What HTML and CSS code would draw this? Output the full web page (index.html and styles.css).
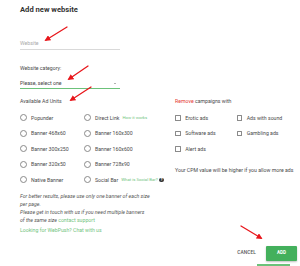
FILE: index.html
```html
<!DOCTYPE html>
<html lang="en">
<head>
<meta charset="utf-8">
<title>Add new website</title>
<link rel="stylesheet" href="styles.css">
</head>
<body>
<div class="dialog">
  <h1 class="title">Add new website</h1>
  <div class="field">Website</div>
  <div class="label cat-label">Website category:</div>
  <div class="select"><span>Please, select one</span><span class="caret"></span></div>

  <div class="units">
    <div class="col-left">
      <div class="label">Available Ad Units</div>
      <div class="radios">
        <div class="opt"><span class="radio"></span>Popunder</div>
        <div class="opt"><span class="radio"></span>Direct Link<span class="hint">How it works</span></div>
        <div class="opt"><span class="radio"></span>Banner 468x60</div>
        <div class="opt"><span class="radio"></span>Banner 160x300</div>
        <div class="opt"><span class="radio"></span>Banner 300x250</div>
        <div class="opt"><span class="radio"></span>Banner 160x600</div>
        <div class="opt"><span class="radio"></span>Banner 320x50</div>
        <div class="opt"><span class="radio"></span>Banner 728x90</div>
        <div class="opt"><span class="radio"></span>Native Banner</div>
        <div class="opt"><span class="radio"></span>Social Bar<span class="hint">What is Social Bar?</span><span class="info">?</span></div>
      </div>
    </div>
    <div class="col-right">
      <div class="label"><span class="red">Remove</span> campaigns with</div>
      <div class="checks">
        <div class="opt"><span class="box"></span>Erotic ads</div>
        <div class="opt"><span class="box"></span>Ads with sound</div>
        <div class="opt"><span class="box"></span>Software ads</div>
        <div class="opt"><span class="box"></span>Gambling ads</div>
        <div class="opt"><span class="box"></span>Alert ads</div>
      </div>
      <div class="cpm">Your CPM value will be higher if you allow more ads</div>
    </div>
  </div>

  <p class="note">For better results, please use only one banner of each size<br>per page.<br>Please get in touch with us if you need multiple banners<br>of the same size <span class="link">contact support</span></p>
  <div class="webpush">Looking for WebPush? Chat with us</div>

  <div class="actions">
    <span class="cancel">CANCEL</span>
    <span class="add">ADD</span>
  </div>
  <div class="sliver"></div>
</div>

<svg class="arrows" width="300" height="266" viewBox="0 0 300 266" aria-hidden="true">
  <defs>
    <marker id="ah" viewBox="0 0 10 10" refX="7" refY="5" markerWidth="6" markerHeight="6" markerUnits="userSpaceOnUse" orient="auto">
      <path d="M0,0 L10,5 L0,10 z" fill="#e8161b"/>
    </marker>
  </defs>
  <line x1="67" y1="27" x2="46" y2="40" marker-end="url(#ah)"/>
  <line x1="88" y1="66" x2="69" y2="79" marker-end="url(#ah)"/>
  <line x1="91" y1="87" x2="71" y2="100" marker-end="url(#ah)"/>
  <line x1="241" y1="226" x2="261" y2="238" marker-end="url(#ah)"/>
</svg>
</body>
</html>
```

FILE: styles.css
```css
* { box-sizing: border-box; margin: 0; padding: 0; }
html, body { width: 300px; height: 266px; overflow: hidden; background: #fff; }
body {
  position: relative;
  font-family: Roboto, "Liberation Sans", sans-serif;
  font-size: 5.2px;
  line-height: 8px;
  color: #4a4a4a;
}
.dialog { padding: 5px 0 0 20px; }
.title { font-size: 7.6px; line-height: 10px; font-weight: 700; color: #333; }
.field {
  width: 100px;
  margin-top: 24px;
  padding-bottom: 1.5px;
  border-bottom: 1px solid #d9d9d9;
  color: #aaa;
}
.cat-label { margin-top: 14.5px; }
.select {
  width: 100px;
  margin-top: 7px;
  padding-right: 4px;
  padding-bottom: 0.5px;
  border-bottom: 1px solid #6cc27a;
  display: flex;
  justify-content: space-between;
  align-items: center;
  color: #444;
}
.caret {
  width: 0; height: 0;
  border-left: 1.5px solid transparent;
  border-right: 1.5px solid transparent;
  border-top: 1.8px solid #666;
}
.units {
  margin-top: 8.5px;
  display: grid;
  grid-template-columns: 155px 1fr;
}
.radios {
  margin-top: 5px;
  display: grid;
  grid-template-columns: 64px 1fr;
  grid-auto-rows: 15.5px;
}
.checks {
  margin-top: 5px;
  display: grid;
  grid-template-columns: 61.5px 1fr;
  grid-auto-rows: 15.5px;
}
.opt { display: flex; align-items: center; white-space: nowrap; }
.radio {
  flex: none;
  width: 7px; height: 7px;
  margin-right: 4px;
  border: 0.8px solid #8a8a8a;
  border-radius: 50%;
}
.box {
  flex: none;
  width: 5.5px; height: 5.5px;
  margin-right: 4.7px;
  border: 0.8px solid #8a8a8a;
  border-radius: 0.5px;
}
.hint { margin-left: 3px; font-size: 4.3px; color: #72c47e; }
.info {
  margin-left: 1.5px;
  width: 4.5px; height: 4.5px;
  border-radius: 50%;
  background: #333;
  color: #fff;
  font-size: 3.4px;
  line-height: 4.5px;
  font-weight: 700;
  text-align: center;
}
.red { color: #e53935; }
.cpm { margin-top: 9px; white-space: nowrap; }
.note { margin-top: 4.25px; font-style: italic; color: #555; white-space: nowrap; }
.link { color: #72c47e; font-style: normal; }
.webpush { margin-top: 2px; color: #72c47e; }
.actions {
  margin-top: 12px;
  padding-right: 3px;
  display: flex;
  justify-content: flex-end;
  align-items: center;
  gap: 10px;
}
.cancel { font-size: 4.8px; font-weight: 500; color: #555; letter-spacing: 0.1px; }
.add {
  width: 31px; height: 15px;
  display: flex; align-items: center; justify-content: center;
  background: #43b05c;
  color: #fff;
  font-size: 4.6px;
  font-weight: 700;
  border-radius: 1px;
  box-shadow: 0 1px 2px rgba(0,0,0,0.25);
}
.sliver {
  width: 33px; height: 2px;
  margin: 3px 10px 0 auto;
  background: #6cc27a;
}
.arrows { position: absolute; left: 0; top: 0; pointer-events: none; }
.arrows line { stroke: #e8161b; stroke-width: 1.3; stroke-linecap: round; }
```
